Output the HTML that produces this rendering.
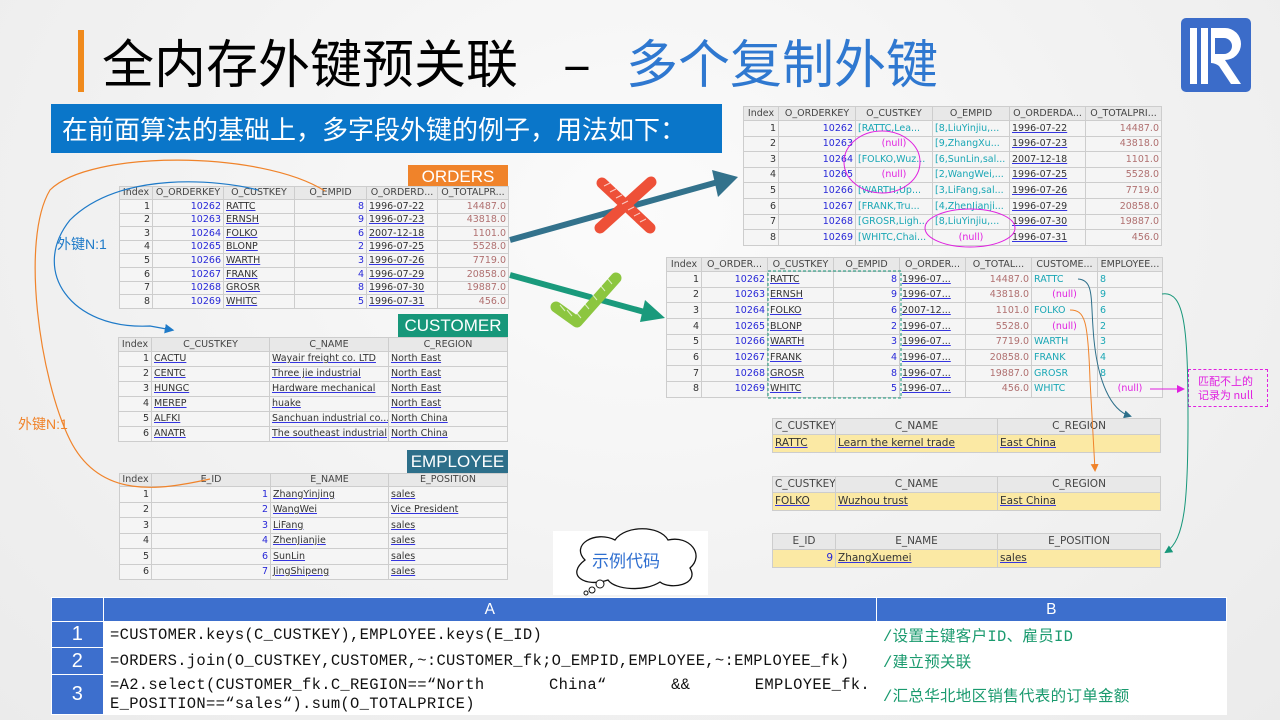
<!DOCTYPE html>
<html><head><meta charset="utf-8">
<style>
*{margin:0;padding:0;box-sizing:border-box}
body{width:1280px;height:720px;overflow:hidden;position:relative;background:radial-gradient(ellipse at 50% 30%,#fbfbfb 0%,#f1f1f1 60%,#ebebeb 100%);font-family:"Liberation Sans","Noto Sans CJK SC",sans-serif}
.abs{position:absolute}
table.t{position:absolute;border-collapse:collapse;table-layout:fixed;font:9.5px "DejaVu Sans","Liberation Sans",sans-serif;color:#333}
.t td{border:1px solid #cdcdcd;background:#f5f5f5;padding:0 2px;white-space:nowrap;overflow:hidden;line-height:1}
.t tr:first-child td{background:#e8e8e8;color:#444;text-align:center}
.t td:first-child{text-align:right}
.t tr:first-child td:first-child{text-align:center}
.r{text-align:right}.n{color:#2828d8}.u{text-decoration:underline;text-decoration-color:#3535e0}.p{color:#b07070}.c{color:#1aa7b5}.m{color:#e020e0;text-align:center}
.y td{background:#fbe9a4 !important}
.lab{position:absolute;color:#fff;font-size:17px;text-align:center;line-height:23px}
.code{position:absolute;left:51px;top:597px;width:1175px;border-collapse:collapse;table-layout:fixed}
.code td{border:1px solid #fff;background:#fff;font:15.5px "Liberation Mono","Noto Sans CJK SC",monospace;letter-spacing:0.3px;color:#111;padding:0 6px;vertical-align:middle}
.code tr:first-child td{background:#3d6fcd;color:#fff;text-align:center;font-family:"Liberation Sans",sans-serif}
.code td.h{background:#3d6fcd;color:#fff;text-align:center;font-family:"Liberation Sans",sans-serif;font-size:20px}
.code td.g{color:#1a9a6e;font-family:"Liberation Mono","Noto Sans CJK SC",monospace}
.tt{position:absolute;top:28px;font-size:52px;line-height:66px;font-family:'Noto Sans CJK SC',sans-serif;white-space:nowrap}
</style></head><body>

<!-- title -->
<div class="abs" style="left:78px;top:30px;width:6px;height:62px;background:#f08a1c"></div>
<div class="tt" style="left:102px;color:#000">全内存外键预关联</div>
<div class="tt" style="left:563px;color:#000">–</div>
<div class="tt" style="left:626px;color:#2f78d0">多个复制外键</div>
<!-- logo -->
<div class="abs" style="left:1181px;top:18px;width:70px;height:74px;background:#3b6cc9;border-radius:5px"></div>
<div class="abs" style="left:1190px;top:28px;width:7px;height:56px;background:#fff"></div>
<div class="abs" style="left:1201px;top:28px;width:7px;height:56px;background:#fff"></div>
<svg class="abs" style="left:1181px;top:18px" width="70" height="74"><path d="M30 10 H44 A16 16 0 0 1 44 42 L60 66 H50 L38 48 A14 14 0 0 0 30 45 Z M34 20 V36 H43 A8 8 0 0 0 43 20 Z" fill="#fff" fill-rule="evenodd"/></svg>

<!-- banner -->
<div class="abs" style="left:51px;top:104px;width:671px;height:49px;background:#0a76c9;color:#fff;font-size:26px;line-height:49px;padding-left:11px;font-family:'Noto Sans CJK SC',sans-serif;white-space:nowrap">在前面算法的基础上，多字段外键的例子，用法如下：</div>

<!-- labels -->
<div class="lab" style="left:408px;top:165px;width:100px;background:#f0832a">ORDERS</div>
<div class="lab" style="left:398px;top:314px;width:110px;background:#17977a">CUSTOMER</div>
<div class="lab" style="left:407px;top:450px;width:101px;background:#2d6f8a">EMPLOYEE</div>

<!-- ORDERS -->
<table class="t" style="left:119px;top:186px;width:389px">
<colgroup><col style="width:33px"><col style="width:71px"><col style="width:71px"><col style="width:72px"><col style="width:71px"><col style="width:71px"></colgroup>
<tr style="height:13px"><td>Index</td><td>O_ORDERKEY</td><td>O_CUSTKEY</td><td>O_EMPID</td><td>O_ORDERD...</td><td>O_TOTALPR...</td></tr>
<tr style="height:13.6px"><td>1</td><td class="r n">10262</td><td><span class="u">RATTC</span></td><td class="r n">8</td><td><span class="u">1996-07-22</span></td><td class="r p">14487.0</td></tr>
<tr style="height:13.6px"><td>2</td><td class="r n">10263</td><td><span class="u">ERNSH</span></td><td class="r n">9</td><td><span class="u">1996-07-23</span></td><td class="r p">43818.0</td></tr>
<tr style="height:13.6px"><td>3</td><td class="r n">10264</td><td><span class="u">FOLKO</span></td><td class="r n">6</td><td><span class="u">2007-12-18</span></td><td class="r p">1101.0</td></tr>
<tr style="height:13.6px"><td>4</td><td class="r n">10265</td><td><span class="u">BLONP</span></td><td class="r n">2</td><td><span class="u">1996-07-25</span></td><td class="r p">5528.0</td></tr>
<tr style="height:13.6px"><td>5</td><td class="r n">10266</td><td><span class="u">WARTH</span></td><td class="r n">3</td><td><span class="u">1996-07-26</span></td><td class="r p">7719.0</td></tr>
<tr style="height:13.6px"><td>6</td><td class="r n">10267</td><td><span class="u">FRANK</span></td><td class="r n">4</td><td><span class="u">1996-07-29</span></td><td class="r p">20858.0</td></tr>
<tr style="height:13.6px"><td>7</td><td class="r n">10268</td><td><span class="u">GROSR</span></td><td class="r n">8</td><td><span class="u">1996-07-30</span></td><td class="r p">19887.0</td></tr>
<tr style="height:13.6px"><td>8</td><td class="r n">10269</td><td><span class="u">WHITC</span></td><td class="r n">5</td><td><span class="u">1996-07-31</span></td><td class="r p">456.0</td></tr>
</table>

<!-- CUSTOMER -->
<table class="t" style="left:118px;top:337px;width:389px">
<colgroup><col style="width:33px"><col style="width:118px"><col style="width:119px"><col style="width:119px"></colgroup>
<tr style="height:14px"><td>Index</td><td>C_CUSTKEY</td><td>C_NAME</td><td>C_REGION</td></tr>
<tr style="height:15px"><td>1</td><td><span class="u">CACTU</span></td><td><span class="u">Wayair freight co. LTD</span></td><td><span class="u">North East</span></td></tr>
<tr style="height:15px"><td>2</td><td><span class="u">CENTC</span></td><td><span class="u">Three jie industrial</span></td><td><span class="u">North East</span></td></tr>
<tr style="height:15px"><td>3</td><td><span class="u">HUNGC</span></td><td><span class="u">Hardware mechanical</span></td><td><span class="u">North East</span></td></tr>
<tr style="height:15px"><td>4</td><td><span class="u">MEREP</span></td><td><span class="u">huake</span></td><td><span class="u">North East</span></td></tr>
<tr style="height:15px"><td>5</td><td><span class="u">ALFKI</span></td><td><span class="u">Sanchuan industrial co...</span></td><td><span class="u">North China</span></td></tr>
<tr style="height:15px"><td>6</td><td><span class="u">ANATR</span></td><td><span class="u">The southeast industrial</span></td><td><span class="u">North China</span></td></tr>
</table>

<!-- EMPLOYEE -->
<table class="t" style="left:119px;top:473px;width:388px">
<colgroup><col style="width:32px"><col style="width:119px"><col style="width:118px"><col style="width:119px"></colgroup>
<tr style="height:13px"><td>Index</td><td>E_ID</td><td>E_NAME</td><td>E_POSITION</td></tr>
<tr style="height:15.5px"><td>1</td><td class="r n">1</td><td><span class="u">ZhangYinjing</span></td><td><span class="u">sales</span></td></tr>
<tr style="height:15.5px"><td>2</td><td class="r n">2</td><td><span class="u">WangWei</span></td><td><span class="u">Vice President</span></td></tr>
<tr style="height:15.5px"><td>3</td><td class="r n">3</td><td><span class="u">LiFang</span></td><td><span class="u">sales</span></td></tr>
<tr style="height:15.5px"><td>4</td><td class="r n">4</td><td><span class="u">ZhenJianjie</span></td><td><span class="u">sales</span></td></tr>
<tr style="height:15.5px"><td>5</td><td class="r n">6</td><td><span class="u">SunLin</span></td><td><span class="u">sales</span></td></tr>
<tr style="height:15.5px"><td>6</td><td class="r n">7</td><td><span class="u">JingShipeng</span></td><td><span class="u">sales</span></td></tr>
</table>

<!-- top right -->
<table class="t" style="left:743px;top:106px;width:418px">
<colgroup><col style="width:35px"><col style="width:77px"><col style="width:77px"><col style="width:77px"><col style="width:76px"><col style="width:76px"></colgroup>
<tr style="height:14px"><td>Index</td><td>O_ORDERKEY</td><td>O_CUSTKEY</td><td>O_EMPID</td><td>O_ORDERDA...</td><td>O_TOTALPRI...</td></tr>
<tr style="height:15.6px"><td>1</td><td class="r n">10262</td><td class="c">[RATTC,Lea...</td><td class="c">[8,LiuYinjiu,...</td><td><span class="u">1996-07-22</span></td><td class="r p">14487.0</td></tr>
<tr style="height:15.6px"><td>2</td><td class="r n">10263</td><td class="m">(null)</td><td class="c">[9,ZhangXu...</td><td><span class="u">1996-07-23</span></td><td class="r p">43818.0</td></tr>
<tr style="height:15.6px"><td>3</td><td class="r n">10264</td><td class="c">[FOLKO,Wuz...</td><td class="c">[6,SunLin,sal...</td><td><span class="u">2007-12-18</span></td><td class="r p">1101.0</td></tr>
<tr style="height:15.6px"><td>4</td><td class="r n">10265</td><td class="m">(null)</td><td class="c">[2,WangWei,...</td><td><span class="u">1996-07-25</span></td><td class="r p">5528.0</td></tr>
<tr style="height:15.6px"><td>5</td><td class="r n">10266</td><td class="c">[WARTH,Up...</td><td class="c">[3,LiFang,sal...</td><td><span class="u">1996-07-26</span></td><td class="r p">7719.0</td></tr>
<tr style="height:15.6px"><td>6</td><td class="r n">10267</td><td class="c">[FRANK,Tru...</td><td class="c">[4,ZhenJianji...</td><td><span class="u">1996-07-29</span></td><td class="r p">20858.0</td></tr>
<tr style="height:15.6px"><td>7</td><td class="r n">10268</td><td class="c">[GROSR,Ligh...</td><td class="c">[8,LiuYinjiu,...</td><td><span class="u">1996-07-30</span></td><td class="r p">19887.0</td></tr>
<tr style="height:15.6px"><td>8</td><td class="r n">10269</td><td class="c">[WHITC,Chai...</td><td class="m">(null)</td><td><span class="u">1996-07-31</span></td><td class="r p">456.0</td></tr>
</table>

<!-- middle right -->
<table class="t" style="left:666px;top:257px;width:496px">
<colgroup><col style="width:35px"><col style="width:66px"><col style="width:66px"><col style="width:66px"><col style="width:66px"><col style="width:66px"><col style="width:66px"><col style="width:65px"></colgroup>
<tr style="height:14px"><td>Index</td><td>O_ORDER...</td><td>O_CUSTKEY</td><td>O_EMPID</td><td>O_ORDER...</td><td>O_TOTAL...</td><td>CUSTOME...</td><td>EMPLOYEE...</td></tr>
<tr style="height:15.7px"><td>1</td><td class="r n">10262</td><td><span class="u">RATTC</span></td><td class="r n">8</td><td><span class="u">1996-07...</span></td><td class="r p">14487.0</td><td class="c">RATTC</td><td class="c">8</td></tr>
<tr style="height:15.7px"><td>2</td><td class="r n">10263</td><td><span class="u">ERNSH</span></td><td class="r n">9</td><td><span class="u">1996-07...</span></td><td class="r p">43818.0</td><td class="m">(null)</td><td class="c">9</td></tr>
<tr style="height:15.7px"><td>3</td><td class="r n">10264</td><td><span class="u">FOLKO</span></td><td class="r n">6</td><td><span class="u">2007-12...</span></td><td class="r p">1101.0</td><td class="c">FOLKO</td><td class="c">6</td></tr>
<tr style="height:15.7px"><td>4</td><td class="r n">10265</td><td><span class="u">BLONP</span></td><td class="r n">2</td><td><span class="u">1996-07...</span></td><td class="r p">5528.0</td><td class="m">(null)</td><td class="c">2</td></tr>
<tr style="height:15.7px"><td>5</td><td class="r n">10266</td><td><span class="u">WARTH</span></td><td class="r n">3</td><td><span class="u">1996-07...</span></td><td class="r p">7719.0</td><td class="c">WARTH</td><td class="c">3</td></tr>
<tr style="height:15.7px"><td>6</td><td class="r n">10267</td><td><span class="u">FRANK</span></td><td class="r n">4</td><td><span class="u">1996-07...</span></td><td class="r p">20858.0</td><td class="c">FRANK</td><td class="c">4</td></tr>
<tr style="height:15.7px"><td>7</td><td class="r n">10268</td><td><span class="u">GROSR</span></td><td class="r n">8</td><td><span class="u">1996-07...</span></td><td class="r p">19887.0</td><td class="c">GROSR</td><td class="c">8</td></tr>
<tr style="height:15.7px"><td>8</td><td class="r n">10269</td><td><span class="u">WHITC</span></td><td class="r n">5</td><td><span class="u">1996-07...</span></td><td class="r p">456.0</td><td class="c">WHITC</td><td class="m">(null)</td></tr>
</table>

<!-- result tables -->
<table class="t" style="left:772px;top:418px;width:388px;font-size:10.5px">
<colgroup><col style="width:63px"><col style="width:162px"><col style="width:163px"></colgroup>
<tr style="height:16px"><td>C_CUSTKEY</td><td>C_NAME</td><td>C_REGION</td></tr>
<tr class="y" style="height:18px"><td style="text-align:left"><span class="u">RATTC</span></td><td><span class="u">Learn the kernel trade</span></td><td><span class="u">East China</span></td></tr>
</table>
<table class="t" style="left:772px;top:476px;width:388px;font-size:10.5px">
<colgroup><col style="width:63px"><col style="width:162px"><col style="width:163px"></colgroup>
<tr style="height:16px"><td>C_CUSTKEY</td><td>C_NAME</td><td>C_REGION</td></tr>
<tr class="y" style="height:18px"><td style="text-align:left"><span class="u">FOLKO</span></td><td><span class="u">Wuzhou trust</span></td><td><span class="u">East China</span></td></tr>
</table>
<table class="t" style="left:772px;top:533px;width:388px;font-size:10.5px">
<colgroup><col style="width:63px"><col style="width:162px"><col style="width:163px"></colgroup>
<tr style="height:16px"><td>E_ID</td><td>E_NAME</td><td>E_POSITION</td></tr>
<tr class="y" style="height:18px"><td class="n">9</td><td><span class="u">ZhangXuemei</span></td><td><span class="u">sales</span></td></tr>
</table>

<!-- null note -->
<div class="abs" style="left:1188px;top:369px;width:80px;height:38px;border:1.5px dashed #e020e0;color:#e020e0;font-size:11px;line-height:14px;padding:4px 0 0 9px;font-family:'Noto Sans CJK SC',sans-serif">匹配不上的<br>记录为 null</div>

<!-- overlays -->
<svg class="abs" style="left:0;top:0" width="1280" height="720">
<defs>
<marker id="ab" markerWidth="8" markerHeight="8" refX="6" refY="4" orient="auto"><path d="M0 0 L8 4 L0 8 Z" fill="#1e7ac8"/></marker>
<marker id="ad" markerWidth="8" markerHeight="8" refX="6" refY="4" orient="auto"><path d="M0 0 L8 4 L0 8 Z" fill="#2d6f8a"/></marker>
<marker id="ao" markerWidth="8" markerHeight="8" refX="6" refY="4" orient="auto"><path d="M0 0 L8 4 L0 8 Z" fill="#f0832a"/></marker>
<marker id="at" markerWidth="8" markerHeight="8" refX="6" refY="4" orient="auto"><path d="M0 0 L8 4 L0 8 Z" fill="#17977a"/></marker>
<marker id="am" markerWidth="8" markerHeight="8" refX="6" refY="4" orient="auto"><path d="M0 0 L8 4 L0 8 Z" fill="#e020e0"/></marker>
</defs>
<path d="M258 190 C220 180 120 170 70 220 C30 270 70 330 150 326 L172 330" fill="none" stroke="#1e7ac8" stroke-width="1.2" marker-end="url(#ab)"/>
<path d="M325 191 C260 150 90 150 50 190 C20 240 40 380 70 440 C100 500 160 490 210 479" fill="none" stroke="#f0832a" stroke-width="1.2"/>
<text x="57" y="249" font-size="14" fill="#1e7ac8" font-family="Liberation Sans,Noto Sans CJK SC,sans-serif">外键N:1</text>
<text x="18" y="429" font-size="14" fill="#f0832a" font-family="Liberation Sans,Noto Sans CJK SC,sans-serif">外键N:1</text>
<line x1="510" y1="240" x2="718" y2="182" stroke="#33728c" stroke-width="6"/>
<path d="M712 170 L738 177 L718 197 Z" fill="#33728c"/>
<line x1="510" y1="275" x2="648" y2="313" stroke="#1a9a7c" stroke-width="6"/>
<path d="M645 300 L665 318 L640 322 Z" fill="#1a9a7c"/>
<g stroke="#ee5038" stroke-width="11" stroke-linecap="round"><line x1="602" y1="183" x2="650" y2="228"/><line x1="651" y1="182" x2="600" y2="228"/></g>
<g stroke="#fff" stroke-width="1" opacity="0.7"><path d="M604 186 l6 -3 M610 192 l6 -3 M616 198 l6 -3 M622 204 l6 -3 M628 210 l6 -3 M634 216 l6 -3 M640 222 l6 -3"/></g>
<path d="M556 307 L577 322 L616 278" fill="none" stroke="#8cc63f" stroke-width="11" stroke-linejoin="round" stroke-linecap="round"/>
<path d="M560 305 l5 6 M567 310 l5 6 M576 312 l5 6 M584 303 l5 6 M592 294 l5 6 M600 285 l5 6 M607 278 l5 6" stroke="#fff" stroke-width="1" opacity="0.7"/>
<ellipse cx="882" cy="162" rx="38" ry="31" fill="none" stroke="#e020e0" stroke-width="1"/>
<ellipse cx="970" cy="228" rx="45" ry="19" fill="none" stroke="#e020e0" stroke-width="1"/>
<rect x="768" y="271" width="133" height="127" fill="none" stroke="#17977a" stroke-width="1" stroke-dasharray="3 2"/>
<path d="M1078 279 C1095 280 1090 300 1094 340 C1098 380 1110 410 1130 416" fill="none" stroke="#2d6f8a" stroke-width="1" marker-end="url(#ad)"/>
<path d="M1070 310 C1085 310 1088 320 1090 380 L1095 470" fill="none" stroke="#f0832a" stroke-width="1" marker-end="url(#ao)"/>
<path d="M1162 294 C1185 290 1188 330 1188 420 C1188 500 1185 540 1166 552" fill="none" stroke="#17977a" stroke-width="1" marker-end="url(#at)"/>
<line x1="1150" y1="389" x2="1183" y2="389" stroke="#e020e0" stroke-width="1" marker-end="url(#am)"/>
<rect x="553" y="531" width="155" height="64" fill="#fff"/>
<path d="M585 560 C570 545 595 530 615 540 C625 525 660 525 668 540 C690 535 705 555 690 568 C700 585 670 590 660 582 C645 592 615 590 608 580 C585 588 565 575 585 560 Z" fill="#fff" stroke="#111" stroke-width="1.3"/>
<circle cx="600" cy="584" r="4" fill="#fff" stroke="#111"/>
<circle cx="592" cy="590" r="3" fill="#fff" stroke="#111"/>
<circle cx="586" cy="593" r="2" fill="#fff" stroke="#111"/>
<text x="592" y="567" font-size="17" fill="#2f6fd0" font-family="Noto Sans CJK SC,sans-serif">示例代码</text>
</svg>

<!-- code table -->
<table class="code">
<colgroup><col style="width:52px"><col style="width:773px"><col style="width:350px"></colgroup>
<tr style="height:24px"><td></td><td>A</td><td>B</td></tr>
<tr style="height:26px"><td class="h">1</td><td>=CUSTOMER.keys(C_CUSTKEY),EMPLOYEE.keys(E_ID)</td><td class="g">/设置主键客户ID、雇员ID</td></tr>
<tr style="height:27px"><td class="h">2</td><td>=ORDERS.join(O_CUSTKEY,CUSTOMER,~:CUSTOMER_fk;O_EMPID,EMPLOYEE,~:EMPLOYEE_fk)</td><td class="g">/建立预关联</td></tr>
<tr style="height:40px"><td class="h">3</td><td style="line-height:19px;text-align:justify;text-align-last:left">=A2.select(CUSTOMER_fk.C_REGION==“North China“ &amp;&amp; EMPLOYEE_fk. E_POSITION==“sales“).sum(O_TOTALPRICE)</td><td class="g">/汇总华北地区销售代表的订单金额</td></tr>
</table>
</body></html>
